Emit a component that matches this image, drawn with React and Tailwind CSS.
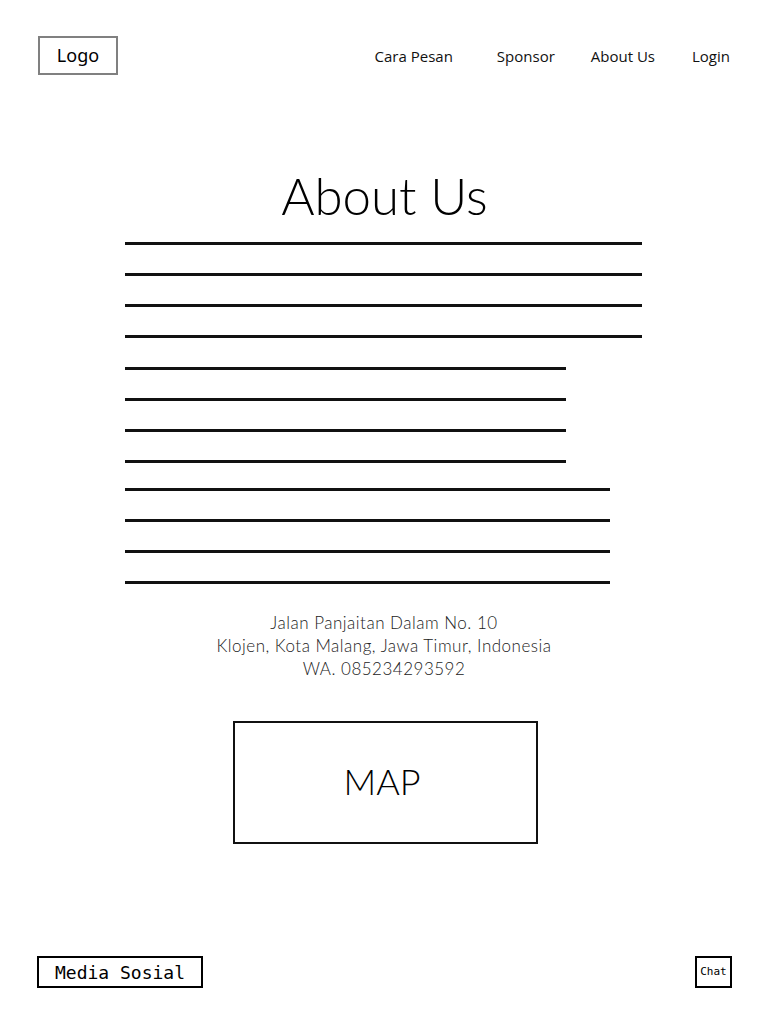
import React from 'react';

const navLinks = [
  { label: 'Cara Pesan', cls: 'ml-0' },
  { label: 'Sponsor', cls: 'ml-[44px]' },
  { label: 'About Us', cls: 'ml-[36px]' },
  { label: 'Login', cls: 'ml-[37px]' }
];

const lineGroups = [
  { width: 'w-[517px]', gap: 'mt-0' },
  { width: 'w-[441px]', gap: 'mt-[29px]' },
  { width: 'w-[485px]', gap: 'mt-[25px]' }
];

const gothic = "font-['Lato','Open_Sans',sans-serif]";

const App = () => {
  return (
    <div className="flex h-[1024px] w-[768px] flex-col bg-white text-black">
      <header className="flex items-center justify-between pl-[38px] pr-[38px] pt-[36px]">
        <div className="flex h-[39px] w-[80px] items-center justify-center border-2 border-[#808080] font-['Noto_Sans',sans-serif] text-[18px]">
          Logo
        </div>
        <nav className="flex items-center pt-[2px] font-['Open_Sans',sans-serif] text-[15px] text-[#111]">
          {navLinks.map((l) => (
            <a key={l.label} href="#" className={l.cls}>
              {l.label}
            </a>
          ))}
        </nav>
      </header>

      <main className="flex flex-1 flex-col">
        <h1 className={`${gothic} mt-[91px] pl-[1px] text-center text-[51px] font-light leading-[60px]`}>
          About Us
        </h1>

        <div className="mt-[16px] flex flex-col pl-[125px]">
          {lineGroups.map((g, gi) => (
            <div key={gi} className={`flex flex-col gap-[28px] ${g.gap}`}>
              {[0, 1, 2, 3].map((i) => (
                <div key={i} className={`h-[3px] ${g.width} bg-[#111]`} />
              ))}
            </div>
          ))}
        </div>

        <div className={`${gothic} mt-[27px] text-center text-[17px] font-light leading-[23px] tracking-[0.5px] text-[#222]`}>
          <p>Jalan Panjaitan Dalam No. 10</p>
          <p>Klojen, Kota Malang, Jawa Timur, Indonesia</p>
          <p>WA. 085234293592</p>
        </div>

        <div className="mt-[41px] flex justify-center pl-[2px]">
          <div className={`${gothic} flex h-[123px] w-[305px] items-center justify-center border-2 border-[#111] pb-[3px] pr-[6px] text-[36px] font-light`}>
            MAP
          </div>
        </div>
      </main>

      <footer className="flex items-center justify-between pb-[36px] pl-[37px] pr-[36px]">
        <div className="flex h-[32px] w-[166px] items-center justify-center border-2 border-black font-['DejaVu_Sans_Mono',monospace] text-[18px]">
          Media Sosial
        </div>
        <div className="flex h-[32px] w-[37px] items-center justify-center border-2 border-black font-['DejaVu_Sans_Mono',monospace] text-[11px]">
          Chat
        </div>
      </footer>
    </div>
  );
};

export default App;
